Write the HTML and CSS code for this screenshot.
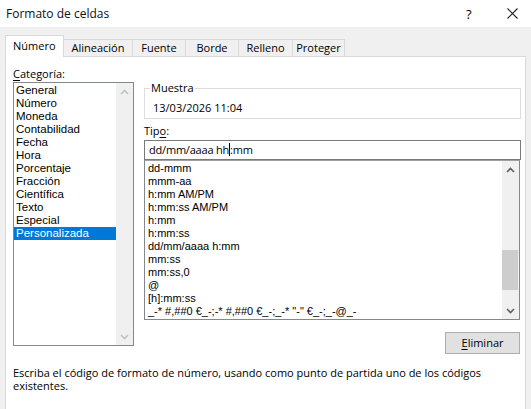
FILE: index.html
```html
<!DOCTYPE html>
<html lang="es">
<head>
    <meta charset="UTF-8">
    <title>Formato de celdas</title>
    <link rel="stylesheet" href="styles.css">
</head>
<body>
    <div class="titlebar">
        <div class="title">Formato de celdas</div>
        <div class="help">?</div>
        <div class="close">
            <svg width="11" height="11" viewBox="0 0 11 11"><path d="M0.5 0.5 L10.5 10.5 M10.5 0.5 L0.5 10.5" stroke="#222" stroke-width="1.1" fill="none"/></svg>
        </div>
    </div>
    <div class="tabs">
        <div class="tab active">Número</div>
        <div class="tab">Alineación</div>
        <div class="tab">Fuente</div>
        <div class="tab">Borde</div>
        <div class="tab">Relleno</div>
        <div class="tab">Proteger</div>
    </div>
    <div class="panel">
        <div class="main">
            <div class="left">
                <div class="label"><u>C</u>ategoría:</div>
                <div class="listbox cat">
                    <div class="items">
                        <div class="item">General</div>
                        <div class="item">Número</div>
                        <div class="item">Moneda</div>
                        <div class="item">Contabilidad</div>
                        <div class="item">Fecha</div>
                        <div class="item">Hora</div>
                        <div class="item">Porcentaje</div>
                        <div class="item">Fracción</div>
                        <div class="item">Científica</div>
                        <div class="item">Texto</div>
                        <div class="item">Especial</div>
                        <div class="item selected">Personalizada</div>
                    </div>
                    <div class="scroll disabled">
                        <svg class="arrow" width="9" height="6" viewBox="0 0 9 6"><path d="M1 5 L4.5 1.5 L8 5" stroke="#c2c2c2" stroke-width="1.6" fill="none"/></svg>
                        <div class="track"></div>
                        <svg class="arrow" width="9" height="6" viewBox="0 0 9 6"><path d="M1 1 L4.5 4.5 L8 1" stroke="#c2c2c2" stroke-width="1.6" fill="none"/></svg>
                    </div>
                </div>
            </div>
            <div class="right">
                <fieldset class="sample">
                    <legend>Muestra</legend>
                    <div class="sample-text">13/03/2026 11:04</div>
                </fieldset>
                <div class="label tipo">Tip<u>o</u>:</div>
                <div class="input">dd/mm/aaaa hh<span class="caret"></span>:mm</div>
                <div class="listbox types">
                    <div class="items">
                        <div class="item">dd-mmm</div>
                        <div class="item">mmm-aa</div>
                        <div class="item">h:mm AM/PM</div>
                        <div class="item">h:mm:ss AM/PM</div>
                        <div class="item">h:mm</div>
                        <div class="item">h:mm:ss</div>
                        <div class="item">dd/mm/aaaa h:mm</div>
                        <div class="item">mm:ss</div>
                        <div class="item">mm:ss,0</div>
                        <div class="item">@</div>
                        <div class="item">[h]:mm:ss</div>
                        <div class="item">_-* #,##0 €_-;-* #,##0 €_-;_-* "-" €_-;_-@_-</div>
                    </div>
                    <div class="scroll">
                        <svg class="arrow" width="9" height="6" viewBox="0 0 9 6"><path d="M1 5 L4.5 1.5 L8 5" stroke="#606060" stroke-width="1.6" fill="none"/></svg>
                        <div class="track">
                            <div class="thumb"></div>
                        </div>
                        <svg class="arrow" width="9" height="6" viewBox="0 0 9 6"><path d="M1 1 L4.5 4.5 L8 1" stroke="#606060" stroke-width="1.6" fill="none"/></svg>
                    </div>
                </div>
                <div class="buttons">
                    <div class="btn"><u>E</u>liminar</div>
                </div>
            </div>
        </div>
        <div class="desc">Escriba el código de formato de número, usando como punto de partida uno de los códigos existentes.</div>
    </div>
</body>
</html>
```
FILE: styles.css
```css
*{
    box-sizing: border-box;
}
body{
    margin: 0;
    width: 531px;
    height: 409px;
    overflow: hidden;
    background-color: #f0f0f0;
    font-family: "Open Sans", "Liberation Sans", sans-serif;
    font-size: 11px;
    color: #000;
}
u{
    text-decoration-thickness: 1px;
    text-underline-offset: 2px;
}
.titlebar{
    height: 27px;
    background-color: #fff;
    display: flex;
    align-items: center;
}
.title{
    flex: 1;
    padding-left: 6px;
    font-size: 12px;
    color: #111;
}
.help{
    width: 14px;
    font-size: 13px;
    margin-right: 27px;
}
.close{
    width: 11px;
    height: 11px;
    margin-right: 13px;
    display: flex;
}
.tabs{
    display: flex;
    align-items: flex-end;
    padding-left: 5px;
    margin-top: 8px;
    height: 21px;
    position: relative;
    z-index: 1;
}
.tab{
    height: 17px;
    line-height: 15px;
    border: 1px solid #d9d9d9;
    border-left: none;
    border-bottom: none;
    background-color: #f0f0f0;
    text-align: center;
}
.tab.active{
    height: 22px;
    line-height: 20px;
    border-left: 1px solid #d9d9d9;
    background-color: #fff;
    width: 59px;
    padding-left: 7px;
    text-align: left;
    margin-bottom: -1px;
}
.tab:nth-child(2){ width: 69px; }
.tab:nth-child(3){ width: 53px; }
.tab:nth-child(4){ width: 53px; }
.tab:nth-child(5){ width: 54px; }
.tab:nth-child(6){ width: 52px; }
.panel{
    margin: 0 5px;
    height: 360px;
    border: 1px solid #d9d9d9;
    background-color: #fff;
    padding: 9px 4px 0 7px;
}
.main{
    display: flex;
    gap: 10px;
}
.left{
    width: 121px;
}
.right{
    width: 377px;
    padding-top: 15px;
}
.label{
    height: 16px;
    line-height: 15px;
}
.listbox{
    display: flex;
    border: 1px solid #828790;
    background-color: #fff;
}
.listbox .items{
    flex: 1;
    padding-top: 1px;
    overflow: hidden;
}
.item{
    height: 13px;
    line-height: 13px;
    white-space: nowrap;
}
.cat{
    height: 264px;
}
.cat .items{
    font-family: "Liberation Sans", Arial, sans-serif;
    font-size: 11.5px;
}
.cat .item{
    padding-left: 2px;
}
.cat .item.selected{
    background-color: #0078d7;
    color: #fff;
}
.scroll{
    width: 17px;
    display: flex;
    flex-direction: column;
    align-items: center;
    background-color: #f0f0f0;
    padding: 6px 0 5px;
}
.scroll .track{
    flex: 1;
    width: 100%;
    position: relative;
}
.arrow{
    flex: none;
}
.thumb{
    position: absolute;
    left: 0;
    right: 1px;
    top: 77px;
    height: 40px;
    background-color: #cdcdcd;
}
.sample{
    margin: 0;
    border: 1px solid #dcdcdc;
    height: 38px;
    padding: 6px 0 0 8px;
}
.sample legend{
    padding: 0 1px;
    margin-left: -3px;
    line-height: 14px;
}
.sample-text{
    line-height: 14px;
}
.tipo{
    margin-top: 4px;
    height: 17px;
}
.input{
    height: 20px;
    border: 1px solid #7a7a7a;
    line-height: 18px;
    padding-left: 4px;
    font-size: 11px;
    letter-spacing: -0.2px;
}
.caret{
    display: inline-block;
    width: 1px;
    height: 13px;
    background-color: #000;
    vertical-align: -2px;
}
.types{
    height: 160px;
    border-color: #828790;
    border-top-color: #a0a0a0;
    width: 376px;
}
.types .items{
    font-family: "Liberation Sans", Arial, sans-serif;
    padding-left: 3px;
}
.buttons{
    display: flex;
    justify-content: flex-end;
    margin-top: 12px;
    padding-right: 1px;
}
.btn{
    width: 75px;
    height: 22px;
    line-height: 19px;
    text-align: center;
    background-color: #e1e1e1;
    border: 1px solid #adadad;
}
.desc{
    margin-top: 12px;
    line-height: 13px;
    width: 480px;
}
```
